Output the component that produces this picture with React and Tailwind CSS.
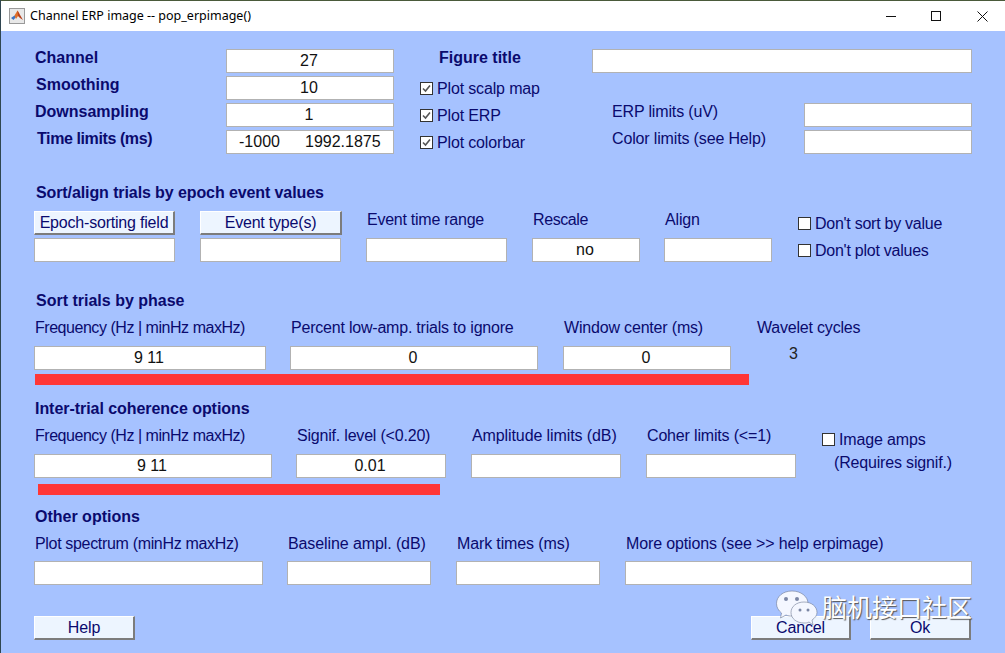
import React from 'react';

const Label = ({ w, children, className = '' }) => (
  <div className={`shrink-0 h-4 leading-[18px] whitespace-nowrap ${className}`} style={{ width: w }}>
    {children}
  </div>
);

const Heading = ({ children, className = '' }) => (
  <div className={`h-4 leading-[18px] font-bold whitespace-nowrap ${className}`}>{children}</div>
);

const Field = ({ w, value, ml = 0, className = '' }) => (
  <div
    className={`shrink-0 h-6 bg-white border border-[#b2b2b2] flex items-center justify-center whitespace-nowrap tracking-normal text-[#111] pr-[2px] ${className}`}
    style={{ width: w, marginLeft: ml }}
  >
    {value}
  </div>
);

const Btn = ({ w, ml = 0, children, className = '' }) => (
  <div
    className={`shrink-0 h-6 bg-[#edf5ff] border-t border-l border-t-white border-l-white border-b-2 border-r-2 border-b-[#7c7c7c] border-r-[#7c7c7c] flex items-center justify-center whitespace-nowrap ${className}`}
    style={{ width: w, marginLeft: ml }}
  >
    {children}
  </div>
);

const Check = ({ label, checked, className = '' }) => (
  <div className={`flex items-center h-6 whitespace-nowrap ${className}`}>
    <div className="w-[13px] h-[13px] bg-white border border-[#333] flex items-center justify-center mr-[4px]">
      {checked && (
        <svg width="11" height="11" viewBox="0 0 11 11" fill="none">
          <path d="M2 5.5 L4.5 8 L9 2.5" stroke="#555" strokeWidth="1.6" />
        </svg>
      )}
    </div>
    <span className="pt-[2px]">{label}</span>
  </div>
);

const MatlabIcon = () => (
  <svg width="16" height="16" viewBox="0 0 16 16">
    <rect x="0.5" y="0.5" width="15" height="15" fill="#e8e8e8" stroke="#999" />
    <path d="M2 10 L5.5 7.5 L7 9 L4.5 12 Z" fill="#3a74c4" />
    <path d="M5.5 7.5 L8.5 2.5 L10.5 6 L7 11 Z" fill="#e0702a" />
    <path d="M8.5 2.5 L10.5 6 L14 12 L11 10 L9 8 Z" fill="#b8401c" />
  </svg>
);

const WeChat = () => (
  <svg width="42" height="36" viewBox="0 0 42 36">
    <path d="M16 1 C7 1 0.5 6.5 0.5 13.5 C0.5 17.5 2.5 20.5 5.5 23 L4.5 28 L10 25 C12 26 14 26 16 26 C25 26 32 20.5 32 13.5 C32 6.5 25 1 16 1 Z" fill="#f4f7ff" stroke="#6f7a94" strokeWidth="0.6" />
    <circle cx="10" cy="9" r="2" fill="#7a86a4" />
    <circle cx="21" cy="9" r="2" fill="#7a86a4" />
    <path d="M28 12 C20.5 12 15 16.5 15 22.5 C15 28.5 20.5 33 28 33 C30 33 31 33 33 32 L37 35 L36 30 C39 28 41 25.5 41 22.5 C41 16.5 35.5 12 28 12 Z" fill="#f4f7ff" stroke="#6f7a94" strokeWidth="0.6" />
    <circle cx="24" cy="20" r="1.5" fill="#7a86a4" />
    <circle cx="32" cy="20" r="1.5" fill="#7a86a4" />
  </svg>
);

const App = () => {
  return (
    <div className="relative w-[1005px] h-[653px] overflow-hidden bg-[#a6c2ff] border-l border-[#2f4650] text-[16px] tracking-[-0.15px] text-[#0a0a6e] font-['Liberation_Sans',Arial,sans-serif]">
      {/* Title bar */}
      <div className="h-[31px] bg-white border-t border-[#4a5a3a] flex items-center pl-2 text-black tracking-normal">
        <MatlabIcon />
        <span className="ml-[5px] text-[12.5px] font-['Noto_Sans',sans-serif]">Channel ERP image -- pop_erpimage()</span>
        <div className="ml-auto flex items-center">
          <svg width="11" height="11" viewBox="0 0 11 11" className="mr-[34px]">
            <path d="M0 5.5 H10" stroke="#111" />
          </svg>
          <svg width="11" height="11" viewBox="0 0 11 11" className="mr-[35px]">
            <rect x="0.5" y="0.5" width="9" height="9" fill="none" stroke="#111" />
          </svg>
          <svg width="11" height="11" viewBox="0 0 11 11" className="mr-[17px]">
            <path d="M0.5 0.5 L10.5 10.5 M10.5 0.5 L0.5 10.5" stroke="#111" />
          </svg>
        </div>
      </div>

      <div className="pl-[33px] flex flex-col">
        {/* Top block */}
        <div className="mt-[18px] flex h-6">
          <Label w={192} className="font-bold tracking-normal pl-px">Channel</Label>
          <Field w={168} value="27" />
          <Label w={198} className="font-bold tracking-normal ml-[45px]">Figure title</Label>
          <Field w={380} ml={-45} />
        </div>
        <div className="mt-[3px] flex h-6">
          <Label w={192} className="font-bold tracking-normal pl-[2px]">Smoothing</Label>
          <Field w={168} value="10" />
          <div className="ml-[26px]"><Check label="Plot scalp map" checked /></div>
        </div>
        <div className="mt-[3px] flex h-6">
          <Label w={192} className="font-bold tracking-normal pl-px">Downsampling</Label>
          <Field w={168} value="1" />
          <div className="ml-[26px] w-[192px]"><Check label="Plot ERP" checked /></div>
          <Label w={192}>ERP limits (uV)</Label>
          <Field w={168} />
        </div>
        <div className="mt-[3px] flex h-6">
          <Label w={192} className="font-bold pl-[3px] tracking-[-0.4px]">Time limits (ms)</Label>
          <Field
            w={168}
            className="justify-start pl-3"
            value={
              <>
                <span className="w-[66px]">-1000</span>
                <span>1992.1875</span>
              </>
            }
          />
          <div className="ml-[26px] w-[192px]"><Check label="Plot colorbar" checked /></div>
          <Label w={192}>Color limits (see Help)</Label>
          <Field w={168} />
        </div>

        {/* Sort/align */}
        <Heading className="mt-[30px] pl-[2px] tracking-[-0.1px]">Sort/align trials by epoch event values</Heading>
        <div className="mt-[11px] flex h-6">
          <Btn w={141} className="tracking-[-0.2px]">Epoch-sorting field</Btn>
          <Btn w={142} ml={25} className="tracking-[-0.2px]">Event type(s)</Btn>
          <Label w={166} className="ml-[25px] tracking-[-0.25px]">Event time range</Label>
          <Label w={132} className="tracking-[-0.4px]">Rescale</Label>
          <Label w={133}>Align</Label>
          <Check label="Don't sort by value" className="tracking-[-0.26px]" />
        </div>
        <div className="mt-[3px] flex h-6">
          <Field w={141} />
          <Field w={141} ml={25} />
          <Field w={141} ml={25} />
          <Field w={108} ml={25} value="no" />
          <Field w={108} ml={24} />
          <div className="ml-[26px]"><Check label="Don't plot values" className="tracking-[-0.25px]" /></div>
        </div>

        {/* Phase */}
        <Heading className="mt-[30px] pl-[2px] tracking-normal">Sort trials by phase</Heading>
        <div className="mt-[11px] flex">
          <Label w={257} className="pl-px tracking-[-0.46px]">Frequency (Hz | minHz maxHz)</Label>
          <Label w={273} className="tracking-[-0.21px]">Percent low-amp. trials to ignore</Label>
          <Label w={193} className="tracking-[-0.18px]">Window center (ms)</Label>
          <Label w={100} className="tracking-[-0.2px]">Wavelet cycles</Label>
        </div>
        <div className="mt-[11px] flex h-6">
          <Field w={232} value="9 11" />
          <Field w={248} ml={24} value="0" />
          <Field w={168} ml={25} value="0" />
          <Label w={20} className="ml-[58px] -mt-px text-[#222]">3</Label>
        </div>
        <div className="mt-1 ml-px w-[714px] h-[11px] bg-[#ff3636]" />

        {/* Coherence */}
        <Heading className="mt-[15px] pl-px tracking-[-0.05px]">Inter-trial coherence options</Heading>
        <div className="mt-[11px] flex h-4">
          <Label w={263} className="pl-px tracking-[-0.46px]">Frequency (Hz | minHz maxHz)</Label>
          <Label w={175} className="tracking-[-0.2px]">Signif. level (&lt;0.20)</Label>
          <Label w={175} className="tracking-[-0.1px]">Amplitude limits (dB)</Label>
          <Label w={175} className="tracking-[-0.17px]">Coher limits (&lt;=1)</Label>
          <div><Check label="Image amps" /></div>
        </div>
        <div className="mt-[11px] flex h-6">
          <Field w={238} value="9 11" />
          <Field w={150} ml={24} value="0.01" />
          <Field w={150} ml={25} />
          <Field w={150} ml={25} />
          <Label w={130} className="ml-[38px] tracking-[-0.17px]">(Requires signif.)</Label>
        </div>
        <div className="mt-[6px] ml-1 w-[402px] h-[11px] bg-[#ff3636]" />

        {/* Other options */}
        <Heading className="mt-[13px] pl-px tracking-normal">Other options</Heading>
        <div className="mt-[11px] flex">
          <Label w={254} className="pl-px tracking-[-0.33px]">Plot spectrum (minHz maxHz)</Label>
          <Label w={169} className="tracking-[-0.1px]">Baseline ampl. (dB)</Label>
          <Label w={169} className="tracking-[-0.13px]">Mark times (ms)</Label>
          <Label w={300} className="tracking-[-0.14px]">More options (see &gt;&gt; help erpimage)</Label>
        </div>
        <div className="mt-[10px] flex h-6">
          <Field w={229} />
          <Field w={144} ml={24} />
          <Field w={144} ml={25} />
          <Field w={347} ml={25} />
        </div>

        {/* Buttons */}
        <div className="mt-[31px] flex h-6">
          <Btn w={101}>Help</Btn>
          <Btn w={100} ml={616}>Cancel</Btn>
          <Btn w={101} ml={19}>Ok</Btn>
        </div>
      </div>

      {/* Watermark */}
      <div className="absolute left-[775px] top-[590px] flex items-start text-white tracking-normal">
        <WeChat />
        <span className="ml-[4px] text-[25px] leading-[32px] font-['Noto_Sans_CJK_SC',sans-serif] [text-shadow:1px_1px_1px_#555]">脑机接口社区</span>
      </div>
    </div>
  );
};

export default App;
